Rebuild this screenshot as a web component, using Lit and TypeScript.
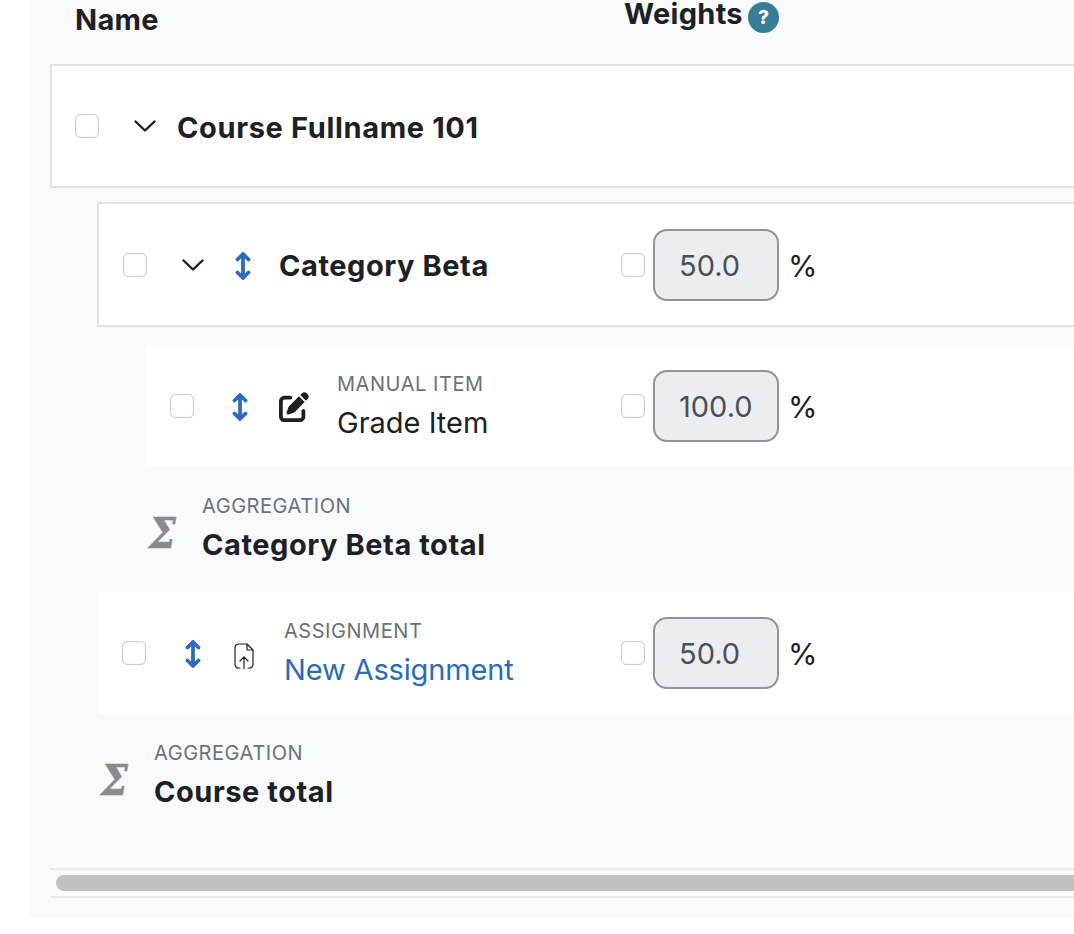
import { LitElement, html, css, svg } from "lit";
import { customElement } from "lit/decorators.js";

const moveIcon = html`<svg class="move" viewBox="0 0 16 30" aria-hidden="true"><path d="M8 3v24M2.500 8.500 8 3l5.500 5.500M2.500 21.500 8 27l5.500-5.500" fill="none" stroke="currentColor" stroke-width="3.800" stroke-linecap="round" stroke-linejoin="round"/></svg>`;
const chevron = html`<svg class="chev" viewBox="0 0 22 12" aria-hidden="true"><path d="M1.500 1.500 11 10.500l9.500-9" fill="none" stroke="currentColor" stroke-width="2.400" stroke-linecap="round" stroke-linejoin="round"/></svg>`;
const editPath = svg`<path d="M471.600 21.700c-21.900-21.900-57.300-21.900-79.200 0L362.300 51.700l97.900 97.900 30.100-30.100c21.900-21.900 21.900-57.300 0-79.200L471.600 21.700zm-299.200 220c-6.100 6.100-10.800 13.600-13.500 21.900l-29.600 88.800c-2.900 8.600-.6 18.100 5.800 24.600s15.900 8.700 24.600 5.800l88.800-29.600c8.200-2.700 15.700-7.400 21.900-13.500L437.700 172.300 339.700 74.300 172.400 241.700zM96 64C43 64 0 107 0 160V416c0 53 43 96 96 96H352c53 0 96-43 96-96V320c0-17.700-14.300-32-32-32s-32 14.300-32 32v96c0 17.700-14.300 32-32 32H96c-17.700 0-32-14.300-32-32V160c0-17.700 14.300-32 32-32h96c17.700 0 32-14.300 32-32s-14.300-32-32-32H96z"/>`;
const editIcon = html`<svg class="edit" viewBox="0 0 512 512" fill="currentColor" aria-hidden="true">${editPath}</svg>`;
const fileIcon = html`<svg class="file" viewBox="0 0 20 26" aria-hidden="true"><path d="M13 1H4.500A3.500 3.500 0 0 0 1 4.500v17A3.500 3.500 0 0 0 4.500 25H6M14 25h1.500a3.500 3.500 0 0 0 3.500-3.500V7L13 1v6h6M10 26V14M6 18l4-4 4 4" fill="none" stroke="currentColor" stroke-width="1.200" stroke-linejoin="round" stroke-linecap="round"/></svg>`;

@customElement("app-root")
export class AppRoot extends LitElement {
  static styles = css`
    :host { display: block; width: 1074px; height: 934px; overflow: hidden; background: #fff;
      font-family: Inter, "Noto Sans", sans-serif; color: #1d2125; font-size: 29px; line-height: 40px; }
    .panel { margin-left: 30px; height: 917px; background: #f8f9fa; padding-left: 20px; overflow: hidden; }
    .head { display: flex; height: 64px; padding-left: 25px; font-weight: 700; align-items: flex-start; letter-spacing: 0.300px; }
    .head .name { flex: 0 0 549px; line-height: 40px; }
    .weights { display: flex; align-items: flex-start; gap: 5px; line-height: 28px; }
    .help { flex: none; width: 31px; height: 31px; margin-top: 2px; border-radius: 50%; background: #367d96; color: #fff; font-size: 19px;
      font-weight: 800; display: flex; align-items: center; justify-content: center; letter-spacing: 0; }
    .row { display: flex; align-items: center; margin-right: -20px; background: #fff; padding-left: 24px; box-sizing: border-box; }
    .bordered { border: 2px solid #dee2e6; }
    .course { height: 124px; padding-left: 23px; }
    .cat { height: 125px; margin-left: 47px; margin-top: 14px; }
    .grade { height: 122px; margin-left: 96px; margin-top: 18px; }
    .assign { height: 122px; margin-left: 48px; }
    .cb { flex: none; width: 24px; height: 24px; box-sizing: border-box; border: 1.500px solid #cbcdcf; border-radius: 5px; background: #fff;
      box-shadow: inset 0 0 2px #e4e4e4; }
    .chev { flex: none; width: 22px; height: 12px; color: #1d2125; }
    .move { flex: none; width: 16px; height: 30px; margin-top: 2px; color: #2b6cbf; }
    .edit { flex: none; width: 30px; height: 30px; margin-top: 2px; color: #1d2125; }
    .file { flex: none; width: 20px; height: 26px; margin-top: 5px; color: #1d2125; }
    .name { display: flex; align-items: center; }
    .course .name { flex: 0 0 auto; }
    .course .chev { margin-left: 35px; margin-right: 21px; }
    .cat .name { flex: 0 0 498px; }
    .cat .chev { margin-left: 35px; margin-right: 31px; }
    .cat .move { margin-right: 28px; }
    .grade .name { flex: 0 0 451px; }
    .grade .move { margin-left: 38px; margin-right: 31px; }
    .grade .edit { margin-right: 28px; }
    .assign .name { flex: 0 0 499px; }
    .assign .move { margin-left: 39px; margin-right: 33px; }
    .assign .file { margin-right: 30px; }
    .title { font-weight: 700; letter-spacing: 0.550px; }
    .course .title { padding-top: 4px; letter-spacing: 0.650px; }
    .cat .title { padding-top: 2px; }
    .kind { font-size: 20px; line-height: 28px; color: #6a737b; letter-spacing: 0.550px; }
    .stack { display: flex; flex-direction: column; margin-bottom: 6px; }
    .total .stack { margin-bottom: 8px; }
    .total.outer .stack { margin-bottom: 10px; }
    .stack .kind { margin-bottom: 11px; }
    .stack > span:last-child { line-height: 28px; }
    .link { color: #2b6cb8; letter-spacing: -0.150px; }
    .weight { display: flex; align-items: center; }
    .input { width: 126px; height: 72px; box-sizing: border-box; margin-left: 8px; margin-right: 9px; padding: 2px 0 0 24px;
      border: 2px solid #8f959e; border-radius: 14px; background: #ebedf0; color: #495057; display: flex; align-items: center; }
    .pct { padding-top: 2px; font-size: 30px; }
    .total { display: flex; align-items: center; height: 125px; margin-left: 99px; }
    .total.outer { margin-left: 51px; height: 126px; }
    .sigma { flex: none; width: 53px; margin-top: 6px; font-family: "DejaVu Serif", serif; font-weight: 700; font-style: italic;
      font-size: 38px; color: #8a8a8a; line-height: 40px; transform: scaleY(1.150); -webkit-text-stroke: 0.500px #8a8a8a; }
    .track { height: 30px; box-sizing: border-box; margin-top: 28px; margin-right: -20px; border: solid #e8e8e8; border-width: 2px 0; background: #fafafa;
      display: flex; align-items: center; padding-left: 6px; }
    .thumb { flex: 1; height: 16px; border-radius: 8px 0 0 8px; background: #c1c1c1; }
  `;

  private weight(v: string) {
    return html`<div class="weight"><span class="cb"></span><div class="input">${v}</div><span class="pct">%</span></div>`;
  }

  render() {
    return html`<div class="panel">
      <div class="head">
        <div class="name">Name</div>
        <div class="weights">Weights <span class="help">?</span></div>
      </div>
      <div class="row bordered course">
        <div class="name"><span class="cb"></span>${chevron}<span class="title">Course Fullname 101</span></div>
      </div>
      <div class="row bordered cat">
        <div class="name"><span class="cb"></span>${chevron}${moveIcon}<span class="title">Category Beta</span></div>
        ${this.weight("50.0")}
      </div>
      <div class="row grade">
        <div class="name"><span class="cb"></span>${moveIcon}${editIcon}
          <div class="stack"><span class="kind">MANUAL ITEM</span><span>Grade Item</span></div></div>
        ${this.weight("100.0")}
      </div>
      <div class="total">
        <span class="sigma">Σ</span>
        <div class="stack"><span class="kind">AGGREGATION</span><span class="title">Category Beta total</span></div>
      </div>
      <div class="row assign">
        <div class="name"><span class="cb"></span>${moveIcon}${fileIcon}
          <div class="stack"><span class="kind">ASSIGNMENT</span><span class="link">New Assignment</span></div></div>
        ${this.weight("50.0")}
      </div>
      <div class="total outer">
        <span class="sigma">Σ</span>
        <div class="stack"><span class="kind">AGGREGATION</span><span class="title">Course total</span></div>
      </div>
      <div class="track"><div class="thumb"></div></div>
    </div>`;
  }
}
